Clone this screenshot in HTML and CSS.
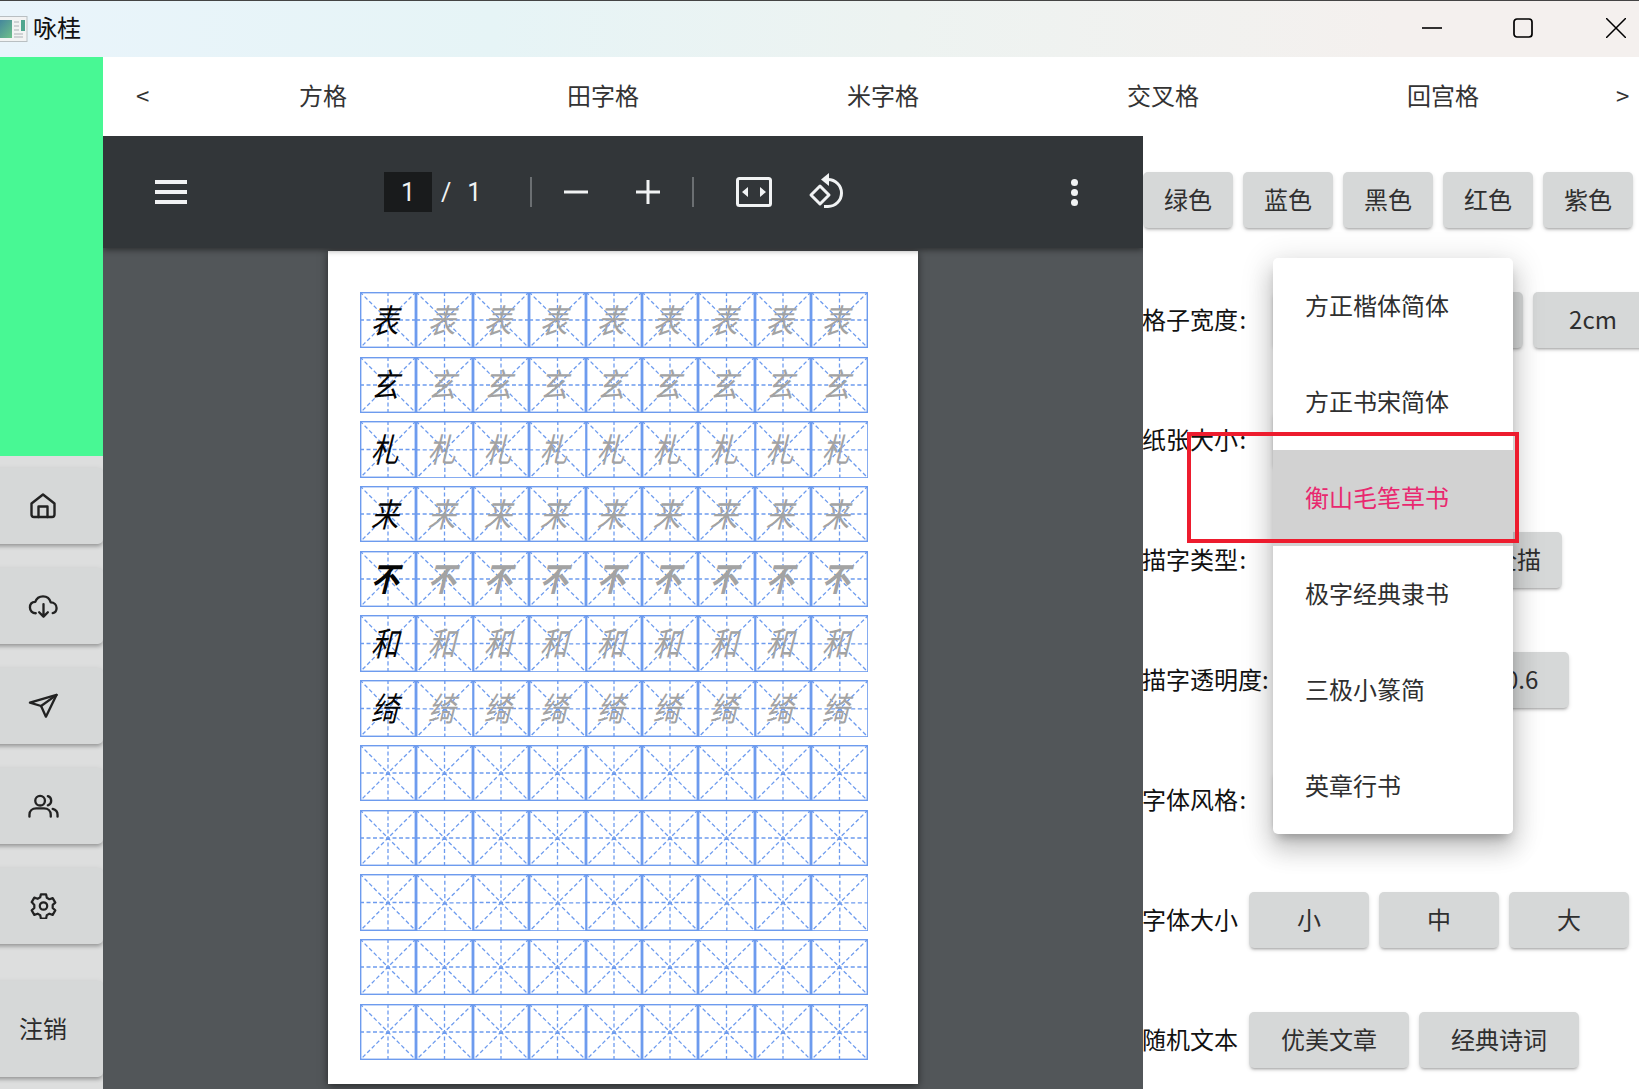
FILE: index.html
```html
<!DOCTYPE html>
<html lang="zh-CN">
<head>
<meta charset="utf-8">
<title>咏桂</title>
<link rel="stylesheet" href="styles.css">
</head>
<body>
<div class="app">
  <header class="titlebar">
    <svg class="app-icon" viewBox="0 0 28 26" width="28" height="26">
      <rect x="-4" y="0.5" width="31" height="25" fill="#f2f3f3" stroke="#b9bfc2"/>
      <defs><linearGradient id="scr" x1="0" y1="0" x2="1" y2="1"><stop offset="0" stop-color="#3f7f9f"/><stop offset="1" stop-color="#6fc08a"/></linearGradient></defs>
      <rect x="-4" y="4" width="16" height="18" fill="url(#scr)"/>
      <rect x="21" y="4" width="4" height="11" fill="#4fa58f"/>
      <path d="M14 6h5M14 10h5M14 14h5M14 18h9M14 21h9" stroke="#c4c8ca" stroke-width="1.5"/>
    </svg>
    <span class="app-name">咏桂</span>
    <div class="win-controls">
      <svg width="20" height="20" viewBox="0 0 20 20"><path d="M0 10h20" stroke="#000" stroke-width="1.6"/></svg>
      <svg width="20" height="20" viewBox="0 0 20 20"><rect x="1" y="1" width="18" height="18" rx="3" fill="none" stroke="#000" stroke-width="1.7"/></svg>
      <svg class="win-close" width="20" height="20" viewBox="0 0 20 20"><path d="M0 0l20 20M20 0L0 20" stroke="#000" stroke-width="1.5"/></svg>
    </div>
  </header>

  <div class="body">
    <aside class="sidebar">
      <div class="brand"></div>
      <nav class="side-nav">
        <button class="side-btn"><svg class="side-icon" viewBox="0 0 26 26"><path d="M1.500 10.500 13 1.500l11.500 9V21.500a2.500 2.500 0 0 1-2.500 2.500H4a2.500 2.500 0 0 1-2.500-2.500Z"/><path d="M8.500 24V13.500h9V24"/></svg></button>
        <button class="side-btn"><svg class="side-icon wide" viewBox="0 0 32 26"><path d="M8 20.500C4.500 20.500 2 18 2 14.500 2 11.200 4.300 9 7.500 8.800 8.800 5 12 3 15.500 3c4 0 7 2.600 8 6.300 3.500.2 6 2.500 6 5.700 0 2.800-1.800 4.800-4 5.300"/><path d="M16 11v13M11.500 19.500 16 24l4.500-4.500"/></svg></button>
        <button class="side-btn"><svg class="side-icon wide" viewBox="0 0 32 26"><path d="M2 9.500 29.500 1.500 18.500 24l-5-11Z"/><path d="M13.500 13 29.500 1.500"/></svg></button>
        <button class="side-btn"><svg class="side-icon wide" viewBox="0 0 32 26"><circle cx="12.500" cy="7.500" r="5"/><path d="M1.500 24v-2c0-4 3-6.500 7-6.500h8c4 0 7 2.500 7 6.500v2"/><path d="M20.500 2.800a5 5 0 0 1 0 9.500M25.500 16c3 .8 5 3 5 6v2"/></svg></button>
        <button class="side-btn"><svg class="side-icon wide" viewBox="0 0 32 28"><circle cx="16" cy="14" r="4"/><path d="M13.200 1.500h5.600l.8 3.700 2.700 1.500 3.600-1.200 2.800 4.800-2.800 2.500v3.400l2.800 2.500-2.800 4.800-3.600-1.200-2.700 1.500-.8 3.700h-5.600l-.8-3.700-2.700-1.500-3.600 1.200-2.800-4.800 2.800-2.500v-3.400L3.300 9.800l2.800-4.800 3.600 1.200 2.700-1.500Z"/></svg></button>
        <button class="side-btn side-text">注销</button>
      </nav>
    </aside>

    <main class="content">
      <nav class="tabs">
        <span class="tab-arrow">&lt;</span>
        <span class="tab">方格</span>
        <span class="tab">田字格</span>
        <span class="tab">米字格</span>
        <span class="tab">交叉格</span>
        <span class="tab">回宫格</span>
        <span class="tab-arrow tab-next">&gt;</span>
      </nav>

      <div class="workspace">
        <section class="viewer">
          <div class="pdf-toolbar">
            <div class="hamburger"><i></i><i></i><i></i></div>
            <div class="pager"><span class="page-box">1</span><span class="page-sep">/</span><span class="page-total">1</span></div>
            <span class="divider first"></span>
            <svg class="tool minus" viewBox="0 0 24 24" width="24" height="24"><path d="M0 12h24" stroke="#f1f3f4" stroke-width="3"/></svg>
            <svg class="tool plus" viewBox="0 0 24 24" width="24" height="24"><path d="M0 12h24M12 0v24" stroke="#f1f3f4" stroke-width="3"/></svg>
            <span class="divider second"></span>
            <svg class="tool fit" viewBox="0 0 36 30" width="36" height="30"><rect x="1.500" y="1.500" width="33" height="27" rx="2" fill="none" stroke="#f1f3f4" stroke-width="3"/><path d="M12 10v10l-6-5ZM24 10v10l6-5Z" fill="#f1f3f4"/></svg>
            <svg class="tool rotate" viewBox="0 0 36 36" width="36" height="36"><path d="M11 12 2 21l9 9 9-9Z" fill="none" stroke="#f1f3f4" stroke-width="3" stroke-linejoin="round"/><path d="M19 5.500A13.500 13.500 0 0 1 19 32.500H15" fill="none" stroke="#f1f3f4" stroke-width="3"/><path d="M20 -1v13l-8-6.500Z" fill="#f1f3f4"/></svg>
            <div class="kebab"><i></i><i></i><i></i></div>
          </div>
          <div class="page">
            <div class="sheet">
              <div class="cell lead"><span>表</span></div><div class="cell"><span>表</span></div><div class="cell"><span>表</span></div><div class="cell"><span>表</span></div><div class="cell"><span>表</span></div><div class="cell"><span>表</span></div><div class="cell"><span>表</span></div><div class="cell"><span>表</span></div><div class="cell"><span>表</span></div>
              <div class="cell lead"><span>玄</span></div><div class="cell"><span>玄</span></div><div class="cell"><span>玄</span></div><div class="cell"><span>玄</span></div><div class="cell"><span>玄</span></div><div class="cell"><span>玄</span></div><div class="cell"><span>玄</span></div><div class="cell"><span>玄</span></div><div class="cell"><span>玄</span></div>
              <div class="cell lead"><span>札</span></div><div class="cell"><span>札</span></div><div class="cell"><span>札</span></div><div class="cell"><span>札</span></div><div class="cell"><span>札</span></div><div class="cell"><span>札</span></div><div class="cell"><span>札</span></div><div class="cell"><span>札</span></div><div class="cell"><span>札</span></div>
              <div class="cell lead"><span>来</span></div><div class="cell"><span>来</span></div><div class="cell"><span>来</span></div><div class="cell"><span>来</span></div><div class="cell"><span>来</span></div><div class="cell"><span>来</span></div><div class="cell"><span>来</span></div><div class="cell"><span>来</span></div><div class="cell"><span>来</span></div>
              <div class="cell lead heavy"><span>不</span></div><div class="cell heavy"><span>不</span></div><div class="cell heavy"><span>不</span></div><div class="cell heavy"><span>不</span></div><div class="cell heavy"><span>不</span></div><div class="cell heavy"><span>不</span></div><div class="cell heavy"><span>不</span></div><div class="cell heavy"><span>不</span></div><div class="cell heavy"><span>不</span></div>
              <div class="cell lead"><span>和</span></div><div class="cell"><span>和</span></div><div class="cell"><span>和</span></div><div class="cell"><span>和</span></div><div class="cell"><span>和</span></div><div class="cell"><span>和</span></div><div class="cell"><span>和</span></div><div class="cell"><span>和</span></div><div class="cell"><span>和</span></div>
              <div class="cell lead"><span>绮</span></div><div class="cell"><span>绮</span></div><div class="cell"><span>绮</span></div><div class="cell"><span>绮</span></div><div class="cell"><span>绮</span></div><div class="cell"><span>绮</span></div><div class="cell"><span>绮</span></div><div class="cell"><span>绮</span></div><div class="cell"><span>绮</span></div>
              <div class="cell"></div><div class="cell"></div><div class="cell"></div><div class="cell"></div><div class="cell"></div><div class="cell"></div><div class="cell"></div><div class="cell"></div><div class="cell"></div>
              <div class="cell"></div><div class="cell"></div><div class="cell"></div><div class="cell"></div><div class="cell"></div><div class="cell"></div><div class="cell"></div><div class="cell"></div><div class="cell"></div>
              <div class="cell"></div><div class="cell"></div><div class="cell"></div><div class="cell"></div><div class="cell"></div><div class="cell"></div><div class="cell"></div><div class="cell"></div><div class="cell"></div>
              <div class="cell"></div><div class="cell"></div><div class="cell"></div><div class="cell"></div><div class="cell"></div><div class="cell"></div><div class="cell"></div><div class="cell"></div><div class="cell"></div>
              <div class="cell"></div><div class="cell"></div><div class="cell"></div><div class="cell"></div><div class="cell"></div><div class="cell"></div><div class="cell"></div><div class="cell"></div><div class="cell"></div>
            </div>
          </div>
        </section>

        <section class="panel">
          <div class="row">
            <button class="btn w90">绿色</button><button class="btn w90">蓝色</button><button class="btn w90">黑色</button><button class="btn w90">红色</button><button class="btn w90">紫色</button>
          </div>
          <div class="row">
            <span class="label colon">格子宽度&#8202;:</span>
            <button class="btn w120"></button><button class="btn w120"></button><button class="btn w120">2cm</button>
          </div>
          <div class="row">
            <span class="label colon">纸张大小&#8202;:</span>
            <button class="btn w120"></button>
          </div>
          <div class="row">
            <span class="label colon">描字类型&#8202;:</span>
            <button class="btn w90 push-type">全描</button>
          </div>
          <div class="row">
            <span class="label">描字透明度:</span>
            <button class="btn w94 push-alpha">0.6</button>
          </div>
          <div class="row">
            <span class="label colon">字体风格&#8202;:</span>
            <button class="btn w120"></button>
          </div>
          <div class="row">
            <span class="label short">字体大小</span>
            <button class="btn w120">小</button><button class="btn w120">中</button><button class="btn w120">大</button>
          </div>
          <div class="row">
            <span class="label short">随机文本</span>
            <button class="btn w160">优美文章</button><button class="btn w160">经典诗词</button>
          </div>

          <ul class="menu">
            <li>方正楷体简体</li>
            <li>方正书宋简体</li>
            <li class="selected">衡山毛笔草书</li>
            <li>极字经典隶书</li>
            <li>三极小篆简</li>
            <li>英章行书</li>
          </ul>
          <div class="annotation"></div>
        </section>
      </div>
    </main>
  </div>
</div>
</body>
</html>
```
FILE: styles.css
```css
* { box-sizing: border-box; }
html, body { margin: 0; padding: 0; }
body {
  width: 1639px;
  height: 1089px;
  overflow: hidden;
  background: #fff;
  font-family: "Noto Sans CJK SC", "Noto Sans", sans-serif;
  font-size: 24px;
  color: #2b2b2b;
}
.app { display: flex; flex-direction: column; height: 1089px; }

/* title bar */
.titlebar {
  height: 57px;
  flex: none;
  display: flex;
  align-items: center;
  border-top: 1px solid #444;
  background: linear-gradient(90deg, #e9f4fb 0%, #e6f4f6 30%, #edf3f1 55%, #f4f0ee 85%, #f4f0ee 100%);
}
.app-icon { flex: none; margin-right: 5px; margin-top: -1px; }
.app-name { color: #111; line-height: 1; font-size: 24px; padding-bottom: 4px; }
.win-controls { margin-left: auto; display: flex; gap: 71px; padding-right: 13px; margin-top: -3px; }
.win-controls svg { display: block; }
.win-controls .win-close { margin-left: 2px; }

.body { flex: 1; display: flex; min-height: 0; }

/* sidebar */
.sidebar { width: 103px; flex: none; display: flex; flex-direction: column; background: #dddede; overflow: hidden; }
.brand { height: 399px; background: #48f894; flex: none; }
.side-nav { display: flex; flex-direction: column; gap: 24px; padding-top: 12px; }
.side-btn {
  height: 76px;
  width: 120px;
  margin-left: -17px;
  flex: none;
  border: 0;
  padding: 0;
  display: flex;
  align-items: center;
  justify-content: center;
  background: #d6d8d8;
  border-radius: 5px;
  box-shadow: 0 3px 4px -1px rgba(0,0,0,.3), 0 1px 6px rgba(0,0,0,.08);
  font-family: inherit;
  font-size: 24px;
  color: #2b2b2b;
}
.side-text { height: 96px; margin-top: 13px; padding-bottom: 3px; }
.side-icon { width: 26px; height: 26px; fill: none; stroke: #222; stroke-width: 2.4; stroke-linejoin: round; stroke-linecap: round; }
.side-icon.wide { width: 31px; }

/* tabs */
.content { flex: 1; display: flex; flex-direction: column; min-width: 0; }
.tabs { height: 79px; flex: none; display: flex; align-items: center; background: #fff; color: #333; padding-bottom: 4px; }
.tab-arrow { width: 80px; padding-left: 33px; font-size: 24px; line-height: 1; }
.tab { width: 280px; text-align: center; }
.tab-next { width: 56px; padding-left: 33px; }

.workspace { flex: 1; display: flex; min-height: 0; }

/* pdf viewer */
.viewer {
  width: 1040px;
  flex: none;
  background: #525659;
  display: flex;
  flex-direction: column;
  overflow: hidden;
  position: relative;
}
.pdf-toolbar {
  height: 112px;
  flex: none;
  background: #323639;
  box-shadow: 0 2px 6px rgba(0,0,0,.45);
  display: flex;
  align-items: center;
  color: #f1f3f4;
  padding-left: 52px;
  position: relative;
  z-index: 1;
}
.hamburger { width: 32px; display: flex; flex-direction: column; gap: 6px; flex: none; }
.hamburger i { display: block; height: 4px; background: #f1f3f4; }
.pager { display: flex; align-items: center; margin-left: 197px; font-family: Roboto, sans-serif; font-size: 25px; flex: none; }
.page-box { width: 48px; height: 40px; background: #191b1c; display: flex; align-items: center; justify-content: center; }
.page-sep { margin-left: 9px; }
.page-total { margin-left: 16px; }
.divider { width: 2px; height: 30px; background: #6b6f72; flex: none; }
.divider.first { margin-left: 49px; }
.tool { flex: none; display: block; overflow: visible; }
.tool.minus { margin-left: 32px; }
.tool.plus { margin-left: 48px; }
.divider.second { margin-left: 32px; }
.tool.fit { margin-left: 42px; }
.tool.rotate { margin-left: 37px; }
.kebab { margin-left: 226px; display: flex; flex-direction: column; gap: 3px; flex: none; }
.kebab i { display: block; width: 7px; height: 7px; border-radius: 50%; background: #f1f3f4; }

.page {
  width: 590px;
  height: 833px;
  margin: 3px 0 0 225px;
  background: #fff;
  flex: none;
  padding: 41px 0 0 32px;
  box-shadow: 0 2px 8px rgba(0,0,0,.55);
}
.sheet { display: grid; grid-template-columns: repeat(9, 56.4px); grid-auto-rows: 56.4px; row-gap: 8.3px; }
.cell {
  display: flex;
  align-items: center;
  justify-content: center;
  font-size: 30px;
  line-height: 1;
  color: #a3a3a3;
  overflow: hidden;
  padding-bottom: 3px;
  background-size: 100% 100%;
  background-image: url("data:image/svg+xml,%3Csvg xmlns='http://www.w3.org/2000/svg' viewBox='0 0 56 56' preserveAspectRatio='none'%3E%3Cpath d='M0 0L56 56M56 0L0 56M28 0V56M0 28H56' stroke='%236d9bee' stroke-width='1.3' stroke-dasharray='4 2.500' fill='none'/%3E%3Crect x='.7' y='.7' width='54.600' height='54.600' fill='none' stroke='%236d9bee' stroke-width='1.400'/%3E%3C/svg%3E");
}
.cell span { display: block; transform: skewX(-14deg) scale(.92, 1.1); }
.cell.lead { color: #050505; }
.cell.heavy { font-weight: 700; }

/* settings panel */
.panel {
  flex: 1;
  min-width: 0;
  position: relative;
  overflow: hidden;
  padding-top: 36px;
  display: flex;
  flex-direction: column;
  gap: 64px;
  background: #fff;
}
.row { display: flex; align-items: center; gap: 10px; height: 56px; flex: none; }
.label { color: #111; white-space: nowrap; flex: none; padding-bottom: 4px; margin-left: -1px; }
.label.colon { width: 121px; }
.label.short { width: 97px; }
.label + .btn { flex: none; }
.btn {
  height: 56px;
  flex: none;
  border: 0;
  padding: 0 0 4px;
  background: #d6d8d8;
  border-radius: 5px;
  font-family: inherit;
  font-size: 24px;
  color: #2f2f2f;
  box-shadow: 0 3px 3px -2px rgba(0,0,0,.3), 0 2px 4px rgba(0,0,0,.12);
}
.w90 { width: 90px; }
.w94 { width: 94px; }
.w120 { width: 120px; }
.w160 { width: 160px; }
.push-type { margin-left: 199px; }
.push-alpha { margin-left: 196px; }

.menu {
  position: absolute;
  left: 130px;
  top: 122px;
  width: 240px;
  height: 576px;
  margin: 0;
  padding: 0;
  list-style: none;
  background: #fff;
  border-radius: 5px;
  box-shadow: 0 8px 10px -5px rgba(0,0,0,.28), 0 16px 24px 2px rgba(0,0,0,.14), 0 6px 30px 5px rgba(0,0,0,.12);
  display: flex;
  flex-direction: column;
}
.menu li { flex: 1; display: flex; align-items: center; padding: 0 0 4px 32px; color: #2f2f2f; }
.menu li.selected { background: #d2d2d2; color: #e9286f; }

.annotation {
  position: absolute;
  left: 44px;
  top: 296px;
  width: 332px;
  height: 111px;
  border: 4px solid #ed1c2e;
}
```
